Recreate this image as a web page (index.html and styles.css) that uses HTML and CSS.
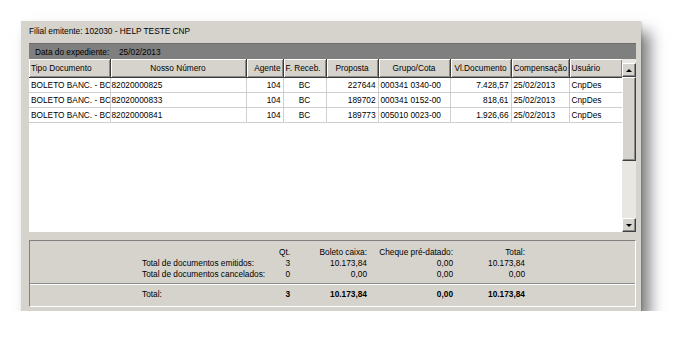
FILE: index.html
```html
<!DOCTYPE html>
<html lang="pt">
<head>
    <meta charset="UTF-8">
    <title>Documentos emitidos</title>
    <link rel="stylesheet" href="styles.css">
</head>
<body>
    <div class="panel">
        <div class="filial">Filial emitente: 102030 - HELP TESTE CNP</div>
        <div class="expediente"><span class="exp-label">Data do expediente:</span>25/02/2013</div>

        <!-- Grid de documentos -->
        <div class="grid-box">
            <div class="grid-area">
                <table class="grid">
                    <colgroup>
                        <col style="width:81px"><col style="width:136px"><col style="width:37px">
                        <col style="width:43px"><col style="width:52px"><col style="width:72px">
                        <col style="width:61px"><col style="width:58px"><col style="width:53px">
                    </colgroup>
                    <thead>
                        <tr>
                            <th class="left">Tipo Documento</th>
                            <th>Nosso Número</th>
                            <th class="right">Agente</th>
                            <th class="left">F. Receb.</th>
                            <th>Proposta</th>
                            <th>Grupo/Cota</th>
                            <th>Vl.Documento</th>
                            <th class="left">Compensação</th>
                            <th class="left">Usuário</th>
                        </tr>
                    </thead>
                    <tbody>
                        <tr>
                            <td>BOLETO BANC. - BC</td><td class="tight">82020000825</td><td class="right">104</td>
                            <td class="center">BC</td><td class="right">227644</td><td>000341 0340-00</td>
                            <td class="right">7.428,57</td><td>25/02/2013</td><td>CnpDes</td>
                        </tr>
                        <tr>
                            <td>BOLETO BANC. - BC</td><td class="tight">82020000833</td><td class="right">104</td>
                            <td class="center">BC</td><td class="right">189702</td><td>000341 0152-00</td>
                            <td class="right">818,61</td><td>25/02/2013</td><td>CnpDes</td>
                        </tr>
                        <tr>
                            <td>BOLETO BANC. - BC</td><td class="tight">82020000841</td><td class="right">104</td>
                            <td class="center">BC</td><td class="right">189773</td><td>005010 0023-00</td>
                            <td class="right">1.926,66</td><td>25/02/2013</td><td>CnpDes</td>
                        </tr>
                    </tbody>
                </table>
            </div>
            <div class="scrollbar">
                <div class="sb-btn"><span class="arrow-up"></span></div>
                <div class="sb-thumb"></div>
                <div class="sb-track"></div>
                <div class="sb-btn"><span class="arrow-down"></span></div>
            </div>
        </div>

        <!-- Totais -->
        <div class="summary">
            <div class="sum-rows">
                <span></span><span class="num">Qt.</span><span class="num">Boleto caixa:</span><span class="num">Cheque pré-datado:</span><span class="num">Total:</span>
                <span>Total de documentos emitidos:</span><span class="num">3</span><span class="num">10.173,84</span><span class="num">0,00</span><span class="num">10.173,84</span>
                <span>Total de documentos cancelados:</span><span class="num">0</span><span class="num">0,00</span><span class="num">0,00</span><span class="num">0,00</span>
            </div>
            <div class="sum-sep"></div>
            <div class="sum-rows total">
                <span>Total:</span><span class="num">3</span><span class="num">10.173,84</span><span class="num">0,00</span><span class="num">10.173,84</span>
            </div>
        </div>
    </div>
</body>
</html>
```

FILE: styles.css
```css
body {
    margin: 0;
    background: #fff;
    font-family: 'Liberation Sans', Arial, sans-serif;
    font-size: 8.3px;
    color: #000;
}

.panel {
    margin: 21px 0 0 21px;
    width: 620px;
    height: 290px;
    box-sizing: border-box;
    padding: 4px 5px 4px 8px;
    background: #d6d3cc;
    box-shadow: 1px 1px 2px rgba(0, 0, 0, 0.15), 9px 11px 14px rgba(0, 0, 0, 0.5);
}

.filial {
    height: 12px;
    line-height: 12px;
    margin-bottom: 6px;
}

.expediente {
    height: 16px;
    line-height: 16px;
    background: #7f7f7f;
    border-top: 1px solid #6c6c6c;
    box-sizing: border-box;
    padding-left: 6px;
}

.exp-label {
    display: inline-block;
    width: 84px;
}

.grid-box {
    display: flex;
    height: 173px;
    background: #fff;
}

.grid-area {
    flex: 1;
    overflow: hidden;
}

.grid {
    table-layout: fixed;
    border-collapse: collapse;
    width: 593px;
}

.grid th {
    height: 18px;
    padding: 0 2px;
    font-weight: normal;
    background: #d6d3cc;
    border-right: 1px solid #3c3c3c;
    border-bottom: 1px solid #3c3c3c;
    box-shadow: inset 1px 1px #fff, inset -1px -1px #8a8a8a;
    white-space: nowrap;
    overflow: hidden;
    text-align: center;
}

.grid td {
    height: 14px;
    line-height: 14px;
    padding: 0 2px;
    border-right: 1px solid #cfcfcf;
    border-bottom: 1px solid #cfcfcf;
    white-space: nowrap;
    overflow: hidden;
}

.grid td.tight {
    padding-left: 1px;
}

.grid .left { text-align: left; }
.grid .right { text-align: right; }
.grid .center { text-align: center; }

.scrollbar {
    width: 14px;
    display: flex;
    flex-direction: column;
    padding-top: 4px;
    box-sizing: border-box;
    background: #e9e7e2;
}

.sb-btn, .sb-thumb {
    background: #d6d3cc;
    border-top: 1px solid #fff;
    border-left: 1px solid #fff;
    border-right: 1px solid #404040;
    border-bottom: 1px solid #404040;
    box-shadow: inset -1px -1px #8a8a8a;
    box-sizing: border-box;
}

.sb-btn {
    height: 14px;
    display: flex;
    align-items: center;
    justify-content: center;
}

.sb-thumb {
    height: 84px;
}

.sb-track {
    flex: 1;
}

.arrow-up, .arrow-down {
    width: 0;
    height: 0;
    border-left: 3px solid transparent;
    border-right: 3px solid transparent;
}

.arrow-up { border-bottom: 3px solid #000; }
.arrow-down { border-top: 3px solid #000; }

.summary {
    margin-top: 8px;
    height: 67px;
    box-sizing: border-box;
    border-top: 1px solid #808080;
    border-left: 1px solid #808080;
    border-right: 1px solid #fff;
    border-bottom: 1px solid #fff;
    padding-top: 6px;
}

.sum-rows {
    display: grid;
    grid-template-columns: 130px 18px 77px 86px 72px;
    padding-left: 112px;
    line-height: 11px;
}

.sum-rows .num {
    text-align: right;
}

.sum-sep {
    margin-top: 3px;
    border-top: 1px solid #8a8a8a;
    border-bottom: 1px solid #fff;
}

.sum-rows.total {
    line-height: 12px;
    margin-top: 3px;
}

.sum-rows.total .num {
    font-weight: bold;
}
```
